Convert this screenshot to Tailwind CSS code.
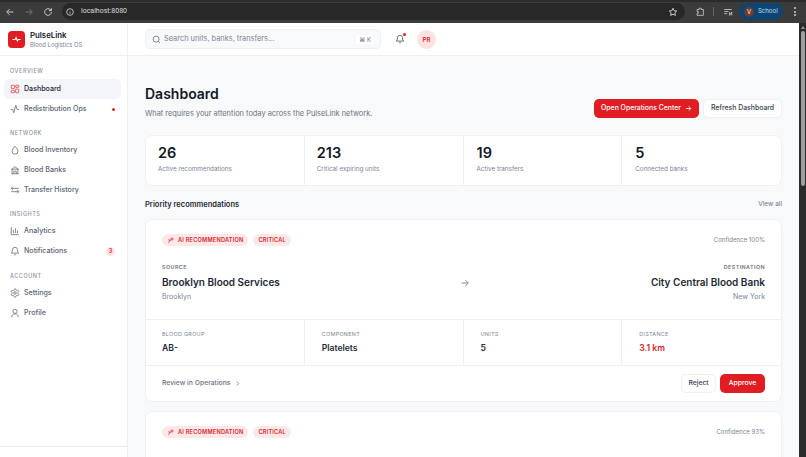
<!DOCTYPE html>
<html lang="en">
<head>
<meta charset="UTF-8">
<title>PulseLink Dashboard</title>
<script src="https://cdn.jsdelivr.net/npm/@tailwindcss/browser@4"></script>
</head>
<body class="h-[457px] w-[806px] overflow-hidden bg-white font-['Inter',sans-serif] text-[#111827]">
  <!-- browser bar -->
  <div class="flex h-[23px] items-center border-t-2 border-t-[#2c2c2c] bg-[#3b3b3b] pb-[2px]">
    <div class="flex w-[62px] items-center gap-[9px] pl-[5px] text-[#c9c9c9]">
      <svg class="h-[10px] w-[10px]" viewBox="0 0 24 24" fill="none" stroke="currentColor" stroke-width="2.4"><path d="M20 12H5M11 5l-7 7 7 7"/></svg>
      <svg class="h-[10px] w-[10px] text-[#777]" viewBox="0 0 24 24" fill="none" stroke="currentColor" stroke-width="2.4"><path d="M4 12h15M13 5l7 7-7 7"/></svg>
      <svg class="h-[10px] w-[10px]" viewBox="0 0 24 24" fill="none" stroke="currentColor" stroke-width="2.4"><path d="M20 12a8 8 0 1 1-2.5-5.8L20 8.5M20 3v5.5h-5.5"/></svg>
    </div>
    <div class="flex h-[17px] w-[623px] items-center justify-between rounded-full bg-[#282828] pl-[4px] pr-[7px] text-[#d8d8d8]">
      <div class="flex items-center gap-[7px]">
        <svg class="h-[8px] w-[8px]" viewBox="0 0 24 24" fill="none" stroke="currentColor" stroke-width="2.4"><circle cx="12" cy="12" r="10"/><path d="M12 11v6M12 7v1"/></svg>
        <span class="font-['Roboto',sans-serif] text-[7px]">localhost:8080</span>
      </div>
      <svg class="h-[10px] w-[10px]" viewBox="0 0 24 24" fill="none" stroke="currentColor" stroke-width="2.2"><path d="M12 3l2.8 5.9 6.2.8-4.6 4.3 1.2 6.2L12 17.2l-5.6 3 1.2-6.2L3 9.7l6.2-.8z"/></svg>
    </div>
    <div class="flex flex-1 items-center text-[#c9c9c9]">
      <svg class="ml-[10px] h-[10px] w-[10px]" viewBox="0 0 24 24" fill="none" stroke="currentColor" stroke-width="2"><path d="M5 6h5V3h5v3h5v14H5v-5h3v-4H5z"/></svg>
      <div class="ml-[8px] h-[9px] w-px bg-[#666]"></div>
      <svg class="ml-[9px] h-[10px] w-[10px]" viewBox="0 0 24 24" fill="none" stroke="currentColor" stroke-width="2"><path d="M3 6h18M3 11h10M3 16h7M16 12v8l5-8v8"/></svg>
      <div class="ml-[6px] flex h-[17px] w-[44px] items-center gap-[4px] rounded-full bg-[#0f4470] pl-[5px]">
        <span class="flex h-[10px] w-[10px] items-center justify-center rounded-full bg-[#6d3a2e] text-[6px] text-white">V</span>
        <span class="font-['Roboto',sans-serif] text-[6.5px] text-[#a8d4f5]">School</span>
      </div>
      <div class="ml-[11px] flex flex-col gap-[1.5px]">
        <span class="h-[2px] w-[2px] rounded-full bg-[#ccc]"></span>
        <span class="h-[2px] w-[2px] rounded-full bg-[#ccc]"></span>
        <span class="h-[2px] w-[2px] rounded-full bg-[#ccc]"></span>
      </div>
    </div>
  </div>

  <div class="flex h-[434px]">
    <!-- sidebar -->
    <aside class="flex w-[128px] shrink-0 flex-col border-r border-[#eef0f3] bg-white">
      <div class="flex h-[33px] items-center gap-[5px] border-b border-[#eef0f3] pl-[8px]">
        <div class="flex h-[17px] w-[17px] items-center justify-center rounded-[4px] bg-[#e11d24]">
          <svg class="h-[11px] w-[11px] text-white" viewBox="0 0 24 24" fill="none" stroke="currentColor" stroke-width="2.5"><path d="M3 12h6l2-4 3 7 2-3h5"/></svg>
        </div>
        <div>
          <div class="text-[7.8px] leading-[11px] font-semibold">PulseLink</div>
          <div class="text-[5.9px] leading-[8px] text-[#7b8494]">Blood Logistics OS</div>
        </div>
      </div>
      <nav class="flex-1 pl-[4px] pr-[6px] pt-[10px]">
        <div class="pl-[6px] text-[5.5px] leading-[10px] font-medium tracking-[0.1em] text-[#8a92a0]">OVERVIEW</div>
        <div class="mt-[3px] flex h-[20px] items-center gap-[4px] rounded-[5px] bg-[#f3f5f8] pl-[6px] text-[7.1px] font-medium text-[#1f2937]">
          <svg class="h-[10px] w-[10px] text-[#e5484d]" viewBox="0 0 24 24" fill="none" stroke="currentColor" stroke-width="2"><rect x="3" y="3" width="7.5" height="8" rx="1"/><rect x="13.5" y="3" width="7.5" height="5" rx="1"/><rect x="13.5" y="12" width="7.5" height="9" rx="1"/><rect x="3" y="15" width="7.5" height="6" rx="1"/></svg>
          Dashboard
        </div>
        <div class="flex h-[20px] items-center gap-[4px] pl-[6px] text-[7.1px] font-medium text-[#5b6472]">
          <svg class="h-[10px] w-[10px] text-[#6b7280]" viewBox="0 0 24 24" fill="none" stroke="currentColor" stroke-width="2"><path d="M2 13h4l3 8 5-18 3 10h5"/></svg>
          Redistribution Ops
          <span class="ml-auto mr-[6px] h-[3px] w-[3px] rounded-full bg-[#e11d24]"></span>
        </div>
        <div class="mt-[9px] pl-[6px] text-[5.5px] leading-[10px] font-medium tracking-[0.1em] text-[#8a92a0]">NETWORK</div>
        <div class="mt-[2px] flex h-[20px] items-center gap-[4px] pl-[6px] text-[7.1px] font-medium text-[#5b6472]">
          <svg class="h-[10px] w-[10px] text-[#6b7280]" viewBox="0 0 24 24" fill="none" stroke="currentColor" stroke-width="2"><path d="M12 3c4 5 7 8 7 12a7 7 0 0 1-14 0c0-4 3-7 7-12z"/></svg>
          Blood Inventory
        </div>
        <div class="flex h-[20px] items-center gap-[4px] pl-[6px] text-[7.1px] font-medium text-[#5b6472]">
          <svg class="h-[10px] w-[10px] text-[#6b7280]" viewBox="0 0 24 24" fill="none" stroke="currentColor" stroke-width="2"><path d="M3 21h18M5 21V10l7-6 7 6v11M9 21v-6h6v6M3 10h18"/></svg>
          Blood Banks
        </div>
        <div class="flex h-[20px] items-center gap-[4px] pl-[6px] text-[7.1px] font-medium text-[#5b6472]">
          <svg class="h-[10px] w-[10px] text-[#6b7280]" viewBox="0 0 24 24" fill="none" stroke="currentColor" stroke-width="2"><path d="M3 8h18M7 4L3 8l4 4M21 16H3M17 12l4 4-4 4"/></svg>
          Transfer History
        </div>
        <div class="mt-[9px] pl-[6px] text-[5.5px] leading-[10px] font-medium tracking-[0.1em] text-[#8a92a0]">INSIGHTS</div>
        <div class="mt-[2px] flex h-[20px] items-center gap-[4px] pl-[6px] text-[7.1px] font-medium text-[#5b6472]">
          <svg class="h-[10px] w-[10px] text-[#6b7280]" viewBox="0 0 24 24" fill="none" stroke="currentColor" stroke-width="2"><path d="M3 3v18h18M8 17V9M13 17V5M18 17v-6"/></svg>
          Analytics
        </div>
        <div class="flex h-[20px] items-center gap-[4px] pl-[6px] text-[7.1px] font-medium text-[#5b6472]">
          <svg class="h-[10px] w-[10px] text-[#6b7280]" viewBox="0 0 24 24" fill="none" stroke="currentColor" stroke-width="2"><path d="M6 9a6 6 0 0 1 12 0c0 6 3 8 3 8H3s3-2 3-8M10 21h4"/></svg>
          Notifications
          <span class="ml-auto mr-[6px] flex h-[9px] w-[9px] items-center justify-center rounded-full bg-[#fde2e4] text-[5.5px] font-semibold text-[#dc2626]">3</span>
        </div>
        <div class="mt-[10px] pl-[6px] text-[5.5px] leading-[10px] font-medium tracking-[0.1em] text-[#8a92a0]">ACCOUNT</div>
        <div class="mt-[2px] flex h-[20px] items-center gap-[4px] pl-[6px] text-[7.1px] font-medium text-[#5b6472]">
          <svg class="h-[10px] w-[10px] text-[#6b7280]" viewBox="0 0 24 24" fill="none" stroke="currentColor" stroke-width="2"><circle cx="12" cy="12" r="3"/><path d="M12.22 2h-.44a2 2 0 0 0-2 2v.18a2 2 0 0 1-1 1.73l-.43.25a2 2 0 0 1-2 0l-.15-.08a2 2 0 0 0-2.73.73l-.22.38a2 2 0 0 0 .73 2.73l.15.1a2 2 0 0 1 1 1.72v.51a2 2 0 0 1-1 1.74l-.15.09a2 2 0 0 0-.73 2.73l.22.38a2 2 0 0 0 2.73.73l.15-.08a2 2 0 0 1 2 0l.43.25a2 2 0 0 1 1 1.73V20a2 2 0 0 0 2 2h.44a2 2 0 0 0 2-2v-.18a2 2 0 0 1 1-1.73l.43-.25a2 2 0 0 1 2 0l.15.08a2 2 0 0 0 2.73-.73l.22-.39a2 2 0 0 0-.73-2.73l-.15-.08a2 2 0 0 1-1-1.74v-.5a2 2 0 0 1 1-1.74l.15-.09a2 2 0 0 0 .73-2.73l-.22-.38a2 2 0 0 0-2.73-.73l-.15.08a2 2 0 0 1-2 0l-.43-.25a2 2 0 0 1-1-1.73V4a2 2 0 0 0-2-2z"/></svg>
          Settings
        </div>
        <div class="flex h-[20px] items-center gap-[4px] pl-[6px] text-[7.1px] font-medium text-[#5b6472]">
          <svg class="h-[10px] w-[10px] text-[#6b7280]" viewBox="0 0 24 24" fill="none" stroke="currentColor" stroke-width="2"><circle cx="12" cy="8" r="5"/><path d="M4 22c0-5 3-8 8-8s8 3 8 8"/></svg>
          Profile
        </div>
      </nav>
      <div class="h-[11px] border-t border-[#e8eaee]"></div>
    </aside>

    <!-- main -->
    <div class="flex min-w-0 flex-1 flex-col overflow-hidden bg-[#f8f9fb]">
      <header class="flex h-[33px] shrink-0 items-center border-b border-[#eef0f3] bg-white pl-[17px]">
        <div class="flex h-[20px] w-[236px] items-center rounded-[5px] border border-[#eef0f3] bg-[#f8f9fb] pl-[6px] pr-[6px]">
          <svg class="h-[9px] w-[9px] text-[#6b7280]" viewBox="0 0 24 24" fill="none" stroke="currentColor" stroke-width="2.2"><circle cx="11" cy="11" r="8"/><path d="M21 21l-4.3-4.3"/></svg>
          <span class="ml-[3px] text-[7.4px] text-[#7b8494]">Search units, banks, transfers...</span>
          <span class="ml-auto rounded-[2px] bg-white px-[3px] text-[6px] leading-[9px] text-[#6b7280]">⌘ K</span>
        </div>
        <div class="relative ml-[14px]">
          <svg class="h-[10px] w-[10px] text-[#4b5563]" viewBox="0 0 24 24" fill="none" stroke="currentColor" stroke-width="2"><path d="M6 9a6 6 0 0 1 12 0c0 6 3 8 3 8H3s3-2 3-8M10 21h4"/></svg>
          <span class="absolute right-[-1px] top-[-1px] h-[3px] w-[3px] rounded-full bg-[#e11d24]"></span>
        </div>
        <div class="ml-[12px] flex h-[19px] w-[19px] items-center justify-center rounded-full bg-[#fde2e4] text-[6px] font-semibold text-[#dc2626]">PR</div>
      </header>

      <main class="px-[17px] pt-[28px]">
        <div class="flex items-start justify-between">
          <div>
            <h1 class="text-[14px] leading-[20px] font-semibold text-[#111827]">Dashboard</h1>
            <p class="mt-[5px] text-[7.4px] leading-[10px] text-[#6b7280]">What requires your attention today across the PulseLink network.</p>
          </div>
          <div class="mt-[15px] flex items-center gap-[4px]">
            <div class="flex h-[19px] w-[105px] items-center justify-center gap-[4px] rounded-[5px] bg-[#e11d24] text-[6.9px] font-medium text-white">
              Open Operations Center
              <svg class="h-[7px] w-[7px]" viewBox="0 0 24 24" fill="none" stroke="currentColor" stroke-width="3"><path d="M4 12h15M13 5l7 7-7 7"/></svg>
            </div>
            <div class="flex h-[19px] w-[79px] items-center justify-center rounded-[5px] border border-[#eef0f3] bg-white text-[6.9px] font-medium text-[#374151]">Refresh Dashboard</div>
          </div>
        </div>

        <section class="mt-[16px] grid h-[51px] grid-cols-4 rounded-[7px] border border-[#eef0f3] bg-white">
          <div class="border-r border-[#eef0f3] pl-[12px] pt-[7px]">
            <div class="text-[14.5px] leading-[19px] font-semibold">26</div>
            <div class="mt-[3px] text-[6.3px] leading-[9px] text-[#7b8494]">Active recommendations</div>
          </div>
          <div class="border-r border-[#eef0f3] pl-[12px] pt-[7px]">
            <div class="text-[14.5px] leading-[19px] font-semibold">213</div>
            <div class="mt-[3px] text-[6.3px] leading-[9px] text-[#7b8494]">Critical expiring units</div>
          </div>
          <div class="border-r border-[#eef0f3] pl-[13px] pt-[7px]">
            <div class="text-[14.5px] leading-[19px] font-semibold">19</div>
            <div class="mt-[3px] text-[6.3px] leading-[9px] text-[#7b8494]">Active transfers</div>
          </div>
          <div class="pl-[13px] pt-[7px]">
            <div class="text-[14.5px] leading-[19px] font-semibold">5</div>
            <div class="mt-[3px] text-[6.3px] leading-[9px] text-[#7b8494]">Connected banks</div>
          </div>
        </section>

        <div class="mt-[13px] flex items-center justify-between">
          <h2 class="text-[7.5px] leading-[11px] font-semibold text-[#1f2937]">Priority recommendations</h2>
          <span class="text-[6.5px] text-[#6b7280]">View all</span>
        </div>

        <article class="mt-[9px] h-[183px] rounded-[7px] border border-[#eef0f3] bg-white">
          <div class="flex items-center justify-between px-[16px] pt-[14px]">
            <div class="flex items-center gap-[5px]">
              <span class="flex h-[12px] items-center gap-[4px] rounded-full bg-[#fde8e9] px-[5px] text-[5.6px] font-semibold tracking-[0.04em] text-[#dc2626]">
                <svg class="h-[7px] w-[7px]" viewBox="0 0 24 24" fill="none" stroke="currentColor" stroke-width="2.5"><path d="M4 20l8-8M14 4h6v6h-6zM4 10h6v4"/></svg>
                AI RECOMMENDATION
              </span>
              <span class="flex h-[12px] items-center rounded-full bg-[#fde8e9] px-[5px] text-[5.6px] font-semibold tracking-[0.04em] text-[#dc2626]">CRITICAL</span>
            </div>
            <span class="text-[6.1px] text-[#7b8494]">Confidence 100%</span>
          </div>
          <div class="mt-[17px] flex items-center justify-between px-[16px]">
            <div>
              <div class="text-[5.4px] leading-[8px] font-semibold tracking-[0.08em] text-[#6b7280]">SOURCE</div>
              <div class="mt-[4px] text-[10px] leading-[15px] font-semibold text-[#1f2937]">Brooklyn Blood Services</div>
              <div class="mt-[1px] text-[7px] leading-[11px] text-[#7b8494]">Brooklyn</div>
            </div>
            <svg class="h-[10px] w-[10px] text-[#6b7280]" viewBox="0 0 24 24" fill="none" stroke="currentColor" stroke-width="2"><path d="M4 12h15M13 5l7 7-7 7"/></svg>
            <div class="text-right">
              <div class="text-[5.4px] leading-[8px] font-semibold tracking-[0.08em] text-[#6b7280]">DESTINATION</div>
              <div class="mt-[4px] text-[10px] leading-[15px] font-semibold text-[#1f2937]">City Central Blood Bank</div>
              <div class="mt-[1px] text-[7px] leading-[11px] text-[#7b8494]">New York</div>
            </div>
          </div>
          <div class="mt-[17px] grid h-[47px] grid-cols-4 border-y border-[#eef0f3]">
            <div class="border-r border-[#eef0f3] pl-[16px] pt-[10px]">
              <div class="text-[5.4px] leading-[8px] tracking-[0.06em] text-[#7b8494]">BLOOD GROUP</div>
              <div class="mt-[4px] text-[8.6px] leading-[12px] font-semibold text-[#1f2937]">AB-</div>
            </div>
            <div class="border-r border-[#eef0f3] pl-[17px] pt-[10px]">
              <div class="text-[5.4px] leading-[8px] tracking-[0.06em] text-[#7b8494]">COMPONENT</div>
              <div class="mt-[4px] text-[8.6px] leading-[12px] font-semibold text-[#1f2937]">Platelets</div>
            </div>
            <div class="border-r border-[#eef0f3] pl-[17px] pt-[10px]">
              <div class="text-[5.4px] leading-[8px] tracking-[0.06em] text-[#7b8494]">UNITS</div>
              <div class="mt-[4px] text-[8.6px] leading-[12px] font-semibold text-[#1f2937]">5</div>
            </div>
            <div class="pl-[17px] pt-[10px]">
              <div class="text-[5.4px] leading-[8px] tracking-[0.06em] text-[#7b8494]">DISTANCE</div>
              <div class="mt-[4px] text-[8.6px] leading-[12px] font-semibold text-[#dc2626]">3.1 km</div>
            </div>
          </div>
          <div class="flex items-center justify-between px-[16px] pt-[8px]">
            <div class="flex items-center gap-[4px] text-[6.8px] font-medium text-[#6b7280]">
              Review in Operations
              <svg class="h-[7px] w-[7px]" viewBox="0 0 24 24" fill="none" stroke="currentColor" stroke-width="2.5"><path d="M9 5l7 7-7 7"/></svg>
            </div>
            <div class="flex items-center gap-[4px]">
              <div class="flex h-[19px] w-[35px] items-center justify-center rounded-[5px] border border-[#eef0f3] bg-white text-[6.8px] font-medium text-[#374151]">Reject</div>
              <div class="flex h-[19px] w-[45px] items-center justify-center rounded-[5px] bg-[#e11d24] text-[6.8px] font-medium text-white">Approve</div>
            </div>
          </div>
        </article>

        <article class="mt-[9px] h-[120px] rounded-[7px] border border-[#eef0f3] bg-white">
          <div class="flex items-center justify-between px-[16px] pt-[14px]">
            <div class="flex items-center gap-[5px]">
              <span class="flex h-[12px] items-center gap-[4px] rounded-full bg-[#fde8e9] px-[5px] text-[5.6px] font-semibold tracking-[0.04em] text-[#dc2626]">
                <svg class="h-[7px] w-[7px]" viewBox="0 0 24 24" fill="none" stroke="currentColor" stroke-width="2.5"><path d="M4 20l8-8M14 4h6v6h-6zM4 10h6v4"/></svg>
                AI RECOMMENDATION
              </span>
              <span class="flex h-[12px] items-center rounded-full bg-[#fde8e9] px-[5px] text-[5.6px] font-semibold tracking-[0.04em] text-[#dc2626]">CRITICAL</span>
            </div>
            <span class="text-[6.1px] text-[#7b8494]">Confidence 93%</span>
          </div>
          <div class="mt-[17px] flex items-center justify-between px-[16px]">
            <div class="text-[5.4px] leading-[8px] font-semibold tracking-[0.08em] text-[#6b7280]">SOURCE</div>
            <div class="text-[5.4px] leading-[8px] font-semibold tracking-[0.08em] text-[#6b7280]">DESTINATION</div>
          </div>
        </article>
      </main>
    </div>

    <!-- scrollbar -->
    <div class="flex w-[7px] shrink-0 flex-col items-center bg-[#2b2b2b]">
      <div class="mt-[3px] h-0 w-0 border-x-[2px] border-b-[3px] border-x-transparent border-b-[#9a9a9a]"></div>
      <div class="mt-[2px] h-[155px] w-[4px] rounded-full bg-[#9f9f9f]"></div>
    </div>
  </div>
</body>
</html>
